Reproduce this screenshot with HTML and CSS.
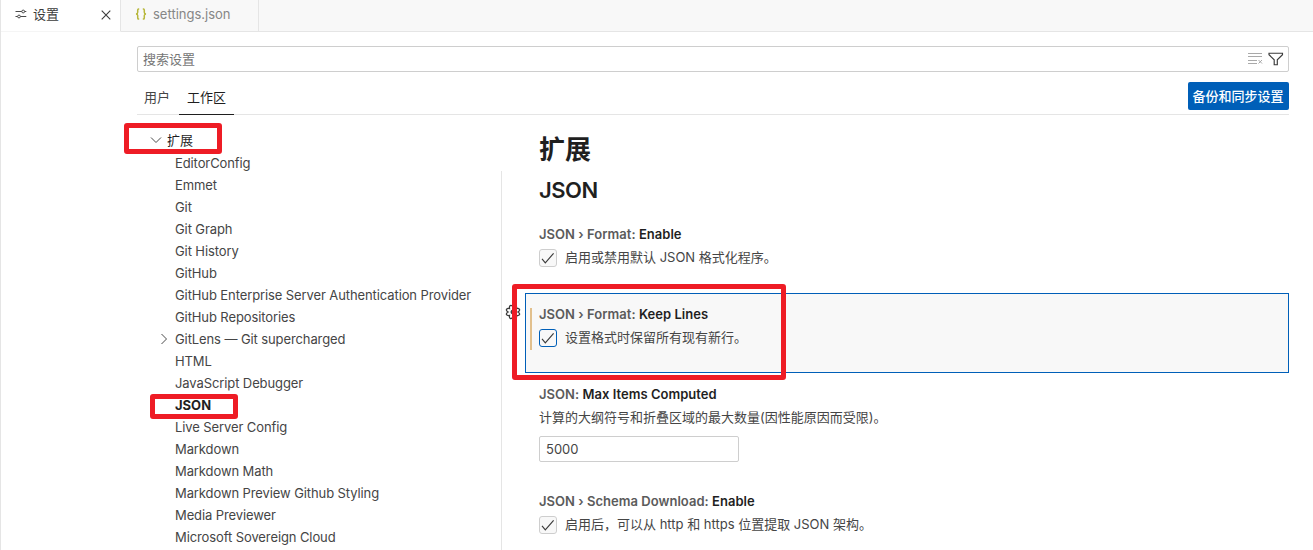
FILE: index.html
```html
<!DOCTYPE html>
<html lang="zh-CN">
<head>
<meta charset="utf-8">
<title>设置</title>
<link rel="stylesheet" href="styles.css">
</head>
<body>
<div class="editor">
  <header class="tabs">
    <div class="tab tab-active">
      <svg class="tab-icon" width="12" height="12" viewBox="0 0 12 12" fill="none" stroke="#4b4b4b"><path d="M0.500 3.500h6.300M9.700 3.500H11.300M0.500 8.500h2M5.400 8.500h5.900"/><circle cx="8.200" cy="3.500" r="1.400"/><circle cx="4" cy="8.500" r="1.400"/></svg>
      <span class="tab-label">设置</span>
      <svg class="tab-close" width="10" height="10" viewBox="0 0 10 10" stroke="#3b3b3b" stroke-width="1.100"><path d="M.7.700l8.600 8.600M9.300.700L.7 9.300"/></svg>
    </div>
    <div class="tab tab-file">
      <svg class="tab-icon" width="12" height="12" viewBox="0 0 12 12" fill="none" stroke="#b7b73b" stroke-width="1.500"><path d="M4.200.900H3.600Q2.700.900 2.700 2v2.200Q2.700 5.800 1 5.900 2.700 6 2.700 7.600V10q0 1.100.9 1.100h.6M7.800.900h.6Q9.300.900 9.300 2v2.200q0 1.600 1.700 1.700-1.700.1-1.700 1.700V10q0 1.100-.9 1.100h-.6"/></svg>
      <span class="tab-label">settings.json</span>
    </div>
  </header>

  <main class="settings">
    <div class="search">
      <span class="placeholder">搜索设置</span>
      <svg width="16" height="14" viewBox="0 0 16 14" fill="none" stroke="#a9a9a9"><path d="M0 1.500h14M0 4.500h14M0 8.500h9M0 11.500h9M10.500 8l3.500 3.500M14 8l-3.500 3.500"/></svg>
      <svg class="filter" width="16" height="14" viewBox="0 0 16 14" fill="none" stroke="#3b3b3b" stroke-width="1.150"><path d="M1 1.200h13.500v1.500L9.300 7.800v4.900H6.200V7.800L1 2.700z"/></svg>
    </div>
    <nav class="scope">
      <span class="scope-tab">用户</span>
      <span class="scope-tab scope-current">工作区</span>
      <button class="sync">备份和同步设置</button>
    </nav>

    <div class="body">
      <ul class="tree">
        <li class="group"><svg width="12" height="12" viewBox="0 0 12 12" fill="none" stroke="#4b4b4b"><path d="M1 3.500l5 5 5-5"/></svg><span>扩展</span><i class="mark mark-group"></i></li>
        <li>EditorConfig</li>
        <li>Emmet</li>
        <li>Git</li>
        <li>Git Graph</li>
        <li>Git History</li>
        <li>GitHub</li>
        <li>GitHub Enterprise Server Authentication Provider</li>
        <li>GitHub Repositories</li>
        <li class="expandable"><svg width="12" height="12" viewBox="0 0 12 12" fill="none" stroke="#4b4b4b"><path d="M3.500 1l5 5-5 5"/></svg>GitLens — Git supercharged</li>
        <li>HTML</li>
        <li>JavaScript Debugger</li>
        <li class="selected">JSON<i class="mark mark-json"></i></li>
        <li>Live Server Config</li>
        <li>Markdown</li>
        <li>Markdown Math</li>
        <li>Markdown Preview Github Styling</li>
        <li>Media Previewer</li>
        <li>Microsoft Sovereign Cloud</li>
      </ul>
      <div class="divider"></div>
      <section class="content">
        <h1>扩展</h1>
        <h2>JSON</h2>
        <article class="item">
          <h3>JSON › Format: <b>Enable</b></h3>
          <div class="option"><span class="check"><svg width="16" height="16" viewBox="0 0 16 16" fill="none" stroke="#3b3b3b" stroke-width="1.150"><path d="M2 8.800l3.300 4L13.600 3.300"/></svg></span><span class="text">启用或禁用默认 JSON 格式化程序。</span></div>
        </article>
        <article class="item item-focused">
          <svg class="gear" width="16" height="16" viewBox="0 0 16 16" fill="none" stroke="#3b3b3b" stroke-width="1.300"><path d="M8 3.100Q9.300.800 10.800 1.600 11.900 2.200 11.500 4.500 13.800 4.100 14.400 5.200 15.200 6.700 12.900 8 15.200 9.300 14.400 10.800 13.800 11.900 11.500 11.500 11.900 13.800 10.800 14.400 9.300 15.200 8 12.900 6.700 15.200 5.200 14.400 4.100 13.800 4.500 11.500 2.200 11.900 1.600 10.800.8 9.300 3.100 8 .8 6.700 1.600 5.200 2.200 4.100 4.500 4.500 4.100 2.200 5.200 1.600 6.700.8 8 3.100z"/><circle cx="8" cy="8" r="1.800"/></svg>
          <i class="modified"></i>
          <h3>JSON › Format: <b>Keep Lines</b></h3>
          <div class="option"><span class="check check-focused"><svg width="16" height="16" viewBox="0 0 16 16" fill="none" stroke="#3b3b3b" stroke-width="1.150"><path d="M2 8.800l3.300 4L13.600 3.300"/></svg></span><span class="text">设置格式时保留所有现有新行。</span></div>
          <i class="mark mark-item"></i>
        </article>
        <article class="item item-number">
          <h3>JSON: <b>Max Items Computed</b></h3>
          <p>计算的大纲符号和折叠区域的最大数量(因性能原因而受限)。</p>
          <div class="number">5000</div>
        </article>
        <article class="item">
          <h3>JSON › Schema Download: <b>Enable</b></h3>
          <div class="option"><span class="check"><svg width="16" height="16" viewBox="0 0 16 16" fill="none" stroke="#3b3b3b" stroke-width="1.150"><path d="M2 8.800l3.300 4L13.600 3.300"/></svg></span><span class="text">启用后，可以从 http 和 https 位置提取 JSON 架构。</span></div>
        </article>
      </section>
    </div>
  </main>
</div>
</body>
</html>
```
FILE: styles.css
```css
* { box-sizing: border-box; }
body {
  margin: 0;
  height: 550px;
  overflow: hidden;
  background: #fff;
  color: #454545;
  font: 13px/18px Inter, "Noto Sans CJK SC", sans-serif;
}
svg { display: block; flex: none; }
h1, h2, h3, p, ul { margin: 0; padding: 0; }
.editor { height: 550px; border-left: 1px solid #e5e5e5; }

.tabs {
  display: flex;
  height: 32px;
  background: #f8f8f8;
  border-bottom: 1px solid #e5e5e5;
}
.tab {
  display: flex;
  align-items: center;
  height: 32px;
  padding: 0 0 3px 14px;
  border-right: 1px solid #e5e5e5;
}
.tab-active { width: 120px; background: #fff; border-bottom: 1px solid #f5f5f5; }
.tab-active .tab-label { margin-left: 6px; color: #3b3b3b; }
.tab-close { margin: 2px 9px 0 auto; }
.tab-file { width: 138px; height: 31px; padding-bottom: 3px; color: #868686; }
.tab-file .tab-label { margin-left: 6px; }

.settings { width: 1152px; margin: 14px 0 0 136px; }
.search {
  display: flex;
  align-items: center;
  height: 26px;
  padding: 0 4px 0 5px;
  border: 1px solid #cecece;
  border-radius: 2px;
}
.placeholder { flex: 1; padding-bottom: 1px; color: #767676; }
.filter { margin-left: 4px; }
.scope {
  display: flex;
  height: 43px;
  padding-top: 10px;
  border-bottom: 1px solid #e5e5e5;
}
.scope-tab { height: 33px; padding: 6px 8px 0; }
.scope-tab:first-child { padding-left: 7px; width: 42px; }
.scope-current { width: 55px; color: #1f1f1f; border-bottom: 1px solid #1f1f1f; }
.sync {
  width: 101px;
  height: 28px;
  margin-left: auto;
  padding: 0 1px 0 0;
  border: 0;
  border-radius: 2px;
  background: #005fb8;
  color: #fff;
  font: 500 13px/28px Inter, "Noto Sans CJK SC", sans-serif;
}

.body { display: flex; height: 435px; }
.tree { width: 364px; padding-top: 15px; list-style: none; letter-spacing: -0.1px; }
.tree li {
  display: flex;
  position: relative;
  height: 22px;
  padding-left: 38px;
  line-height: 22px;
  white-space: nowrap;
}
.tree .group {
  padding: 0 0 2px 13px;
  gap: 5px;
  align-items: center;
  color: #1f1f1f;
  letter-spacing: 0;
}
.tree .expandable { padding-left: 21px; gap: 5px; align-items: center; }
.tree .selected { color: #1f1f1f; font-weight: 700; letter-spacing: 0; }
.divider { width: 1px; margin: 56px 23px 0 0; background: #e5e5e5; }

.content { width: 764px; padding-top: 14px; }
h1, h2 { padding-left: 14px; color: #1f1f1f; font-weight: 600; }
h1 { height: 42px; font-size: 26px; line-height: 41px; }
h2 { height: 42px; font-size: 22px; line-height: 38px; letter-spacing: -0.5px; }
.item { position: relative; height: 80px; padding: 12px 0 0 14px; white-space: nowrap; }
.item-focused { background: #f8f8f8; box-shadow: inset 0 0 0 1px #005fb8; }
.item-number { height: 107px; }
h3 { font-size: 13px; line-height: 18px; font-weight: 600; letter-spacing: 0.03px; color: #5b5b5b; }
h3 b { font-weight: 600; color: #1f1f1f; }
.option { display: flex; align-items: center; height: 18px; margin-top: 6px; gap: 8px; }
.option .text { padding-bottom: 2px; }
.check {
  width: 18px;
  height: 18px;
  border: 1px solid #cecece;
  border-radius: 3px;
  background: #f8f8f8;
}
.check-focused { border-color: #005fb8; }
.item p { margin-top: 5px; }
.number {
  width: 200px;
  height: 26px;
  margin-top: 10px;
  padding: 0 6px;
  border: 1px solid #cecece;
  border-radius: 2px;
  line-height: 25px;
}
.modified { position: absolute; left: 5px; top: 15px; width: 2px; height: 42px; background: #e2c08d; }
.gear { position: absolute; left: -20px; top: 11px; }

.mark { position: absolute; border: 5px solid #ee1c25; border-radius: 3px; }
.mark-group { left: -13px; top: -7px; width: 98px; height: 31px; }
.mark-json { left: 13px; top: 0; width: 88px; height: 25px; }
.mark-item { left: -13px; top: -9px; width: 274px; height: 96px; }
```
